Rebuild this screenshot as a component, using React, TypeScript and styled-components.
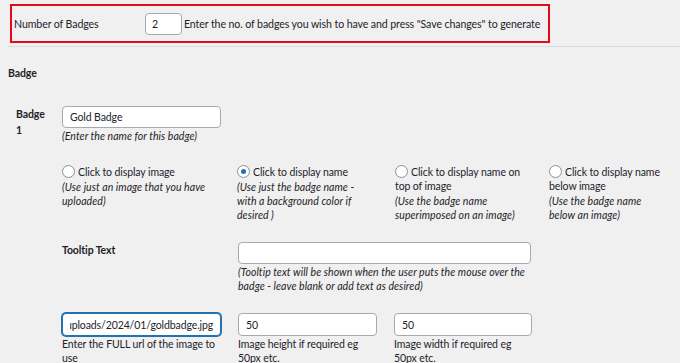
import { Fragment, useLayoutEffect, useRef } from "react";
import styled, { createGlobalStyle } from "styled-components";

const GlobalStyle = createGlobalStyle`
  html, body {
    margin: 0;
    padding: 0;
    background: #f0f0f1;
  }
  body {
    font-family: Lato, "Noto Sans", sans-serif;
    font-size: 10.5px;
    letter-spacing: -0.1px;
    color: #1d2327;
  }
`;

const Page = styled.div`
  width: 680px;
  height: 363px;
  overflow: hidden;
  padding-top: 4px;
  box-sizing: border-box;
`;

const HighlightBox = styled.div`
  margin-left: 10px;
  width: 540px;
  height: 39px;
  box-sizing: border-box;
  border: 2px solid #e8081d;
  display: flex;
  align-items: center;
  padding-left: 2px;
  white-space: nowrap;
  font-size: 10.6px;
`;

const RowLabel = styled.div<{ $width: number; $bold?: boolean }>`
  width: ${(p) => p.$width}px;
  flex-shrink: 0;
  font-weight: ${(p) => (p.$bold ? 700 : 400)};
  line-height: 16px;
`;

const TextInput = styled.input<{ $width: number; $height?: number; $focus?: boolean }>`
  width: ${(p) => p.$width}px;
  height: ${(p) => p.$height ?? 22}px;
  box-sizing: border-box;
  margin: 0;
  padding: 0 7px;
  background: #fff;
  border: 1px solid ${(p) => (p.$focus ? "#2271b1" : "#a7aaad")};
  box-shadow: ${(p) => (p.$focus ? "0 0 0 1px #2271b1" : "none")};
  border-radius: 4px;
  font-family: inherit;
  font-size: 10.5px;
  letter-spacing: -0.1px;
  color: #1d2327;
  outline: none;
`;

const NumberInput = styled(TextInput)`
  padding: 0 6px;
  margin-right: 2px;
`;

const Divider = styled.div`
  margin: 3px 0 0 8px;
  height: 1px;
  background: #dcdcde;
`;

const SectionTitle = styled.div`
  margin: 18px 0 0 8px;
  font-weight: 700;
  line-height: 16px;
`;

const BadgeBlock = styled.div`
  display: flex;
  margin: 25px 0 0 16px;
`;

const BadgeBody = styled.div`
  display: flex;
  flex-direction: column;
`;

const Help = styled.div<{ $italic?: boolean }>`
  font-style: ${(p) => (p.$italic ? "italic" : "normal")};
  letter-spacing: ${(p) => (p.$italic ? "0.06px" : "-0.1px")};
  line-height: 14px;
  margin-top: 1px;
  white-space: nowrap;
`;

const RadioGrid = styled.div`
  display: grid;
  grid-template-columns: 175px 158px 154px 131px;
  margin-top: 22px;
`;

const RadioCell = styled.label`
  line-height: 14px;
  white-space: nowrap;
`;

const Radio = styled.span<{ $checked?: boolean }>`
  display: inline-block;
  width: 11px;
  height: 11px;
  border: 1px solid #8c8f94;
  border-radius: 50%;
  background: #fff;
  vertical-align: -2px;
  margin-right: 3px;
  position: relative;
  &::after {
    content: "";
    display: ${(p) => (p.$checked ? "block" : "none")};
    position: absolute;
    left: 3px;
    top: 3px;
    width: 5px;
    height: 5px;
    border-radius: 50%;
    background: #2271b1;
  }
`;

const FieldRow = styled.div<{ $top: number }>`
  display: flex;
  margin-top: ${(p) => p.$top}px;
`;

const FieldCell = styled.div<{ $width: number }>`
  width: ${(p) => p.$width}px;
  flex-shrink: 0;
  display: flex;
  flex-direction: column;
`;

const Lines = ({ lines }: { lines: string[] }) => (
  <>
    {lines.map((l, i) => (
      <Fragment key={i}>
        {i > 0 && <br />}
        {l}
      </Fragment>
    ))}
  </>
);

const radios = [
  {
    title: ["Click to display image"],
    help: ["(Use just an image that you have", "uploaded)"],
  },
  {
    title: ["Click to display name"],
    help: ["(Use just the badge name -", "with a background color if", "desired )"],
    checked: true,
  },
  {
    title: ["Click to display name on", "top of image"],
    help: ["(Use the badge name", "superimposed on an image)"],
  },
  {
    title: ["Click to display name", "below image"],
    help: ["(Use the badge name", "below an image)"],
  },
];

export default function App() {
  const urlRef = useRef<HTMLInputElement>(null);

  useLayoutEffect(() => {
    if (urlRef.current) urlRef.current.scrollLeft = urlRef.current.scrollWidth;
  }, []);

  return (
    <Page>
      <GlobalStyle />
      <HighlightBox>
        <RowLabel $width={131}>Number of Badges</RowLabel>
        <NumberInput $width={37} $height={22} defaultValue="2" />
        <span>Enter the no. of badges you wish to have and press "Save changes" to generate</span>
      </HighlightBox>
      <Divider />
      <SectionTitle>Badge</SectionTitle>
      <BadgeBlock>
        <RowLabel $width={46} $bold>
          Badge
          <br />1
        </RowLabel>
        <BadgeBody>
          <TextInput $width={159} $height={22} defaultValue="Gold Badge" />
          <Help $italic>(Enter the name for this badge)</Help>
          <RadioGrid>
            {radios.map((r) => (
              <RadioCell key={r.title[0] + r.title.length}>
                <Radio $checked={r.checked} />
                <Lines lines={r.title} />
                <Help $italic>
                  <Lines lines={r.help} />
                </Help>
              </RadioCell>
            ))}
          </RadioGrid>
          <FieldRow $top={20}>
            <FieldCell $width={176}>
              <RowLabel $width={176} $bold>
                Tooltip Text
              </RowLabel>
            </FieldCell>
            <FieldCell $width={300}>
              <TextInput $width={293} $height={22} />
              <Help $italic>
                <Lines
                  lines={[
                    "(Tooltip text will be shown when the user puts the mouse over the",
                    "badge - leave blank or add text as desired)",
                  ]}
                />
              </Help>
            </FieldCell>
          </FieldRow>
          <FieldRow $top={20}>
            <FieldCell $width={176}>
              <TextInput
                ref={urlRef}
                $width={159}
                $height={23}
                $focus
                defaultValue="wp-content/uploads/2024/01/goldbadge.jpg"
              />
              <Help>
                <Lines lines={["Enter the FULL url of the image to", "use"]} />
              </Help>
            </FieldCell>
            <FieldCell $width={156}>
              <TextInput $width={139} $height={23} defaultValue="50" />
              <Help>
                <Lines lines={["Image height if required eg", "50px etc."]} />
              </Help>
            </FieldCell>
            <FieldCell $width={156}>
              <TextInput $width={138} $height={23} defaultValue="50" />
              <Help>
                <Lines lines={["Image width if required eg", "50px etc."]} />
              </Help>
            </FieldCell>
          </FieldRow>
        </BadgeBody>
      </BadgeBlock>
    </Page>
  );
}
